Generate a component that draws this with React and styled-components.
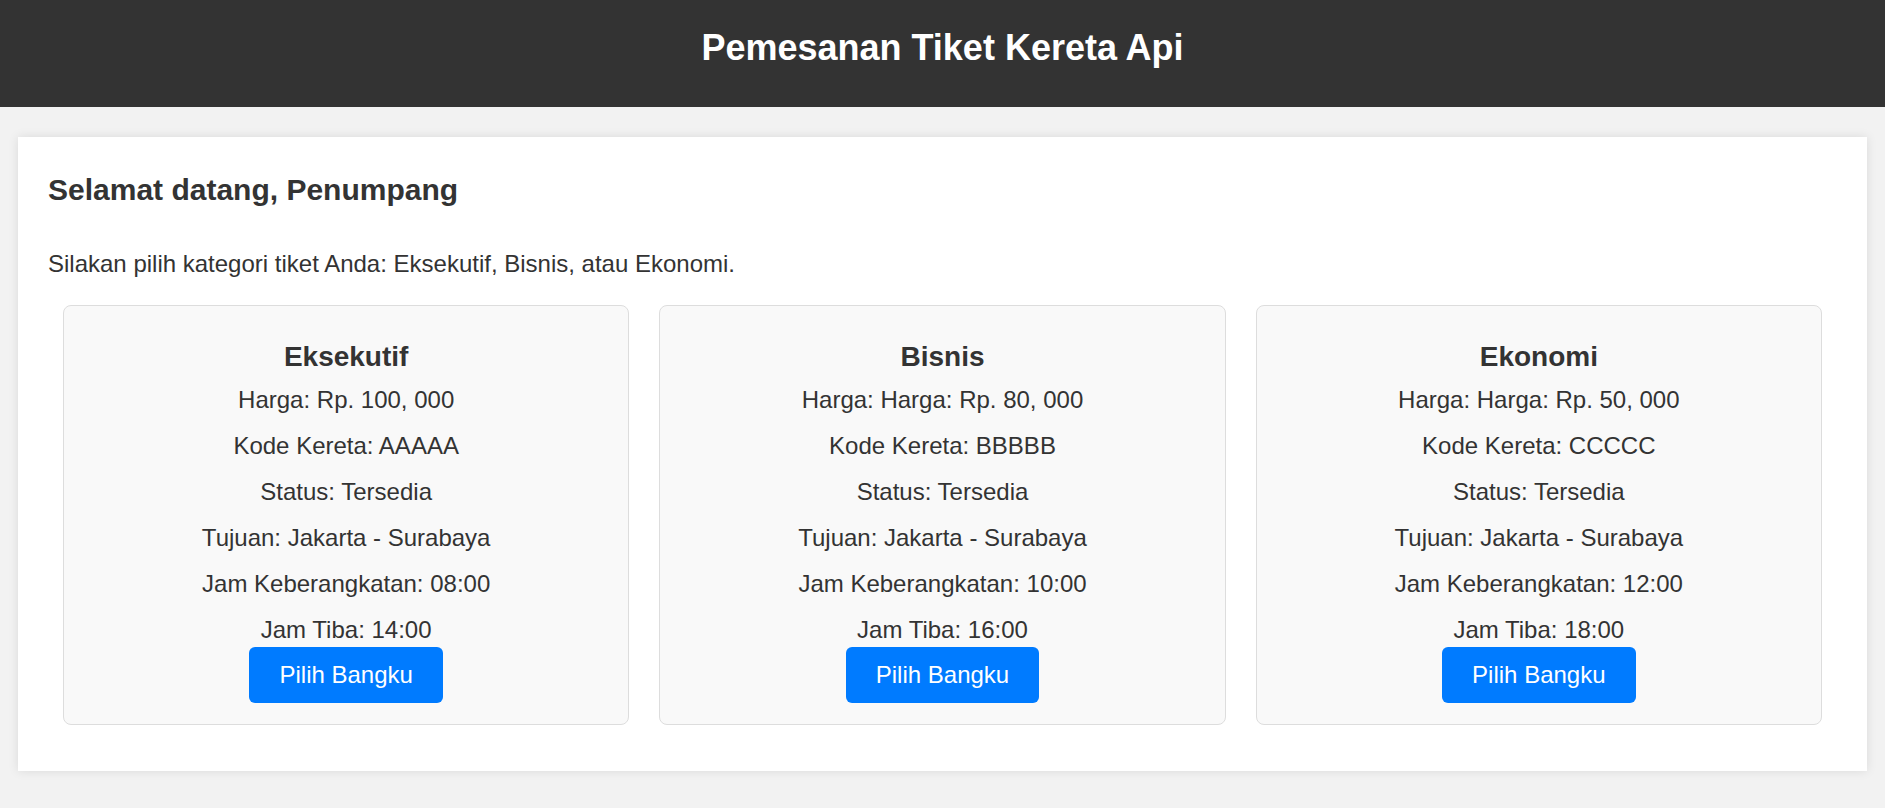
import React from 'react';
import styled, { createGlobalStyle } from 'styled-components';

const GlobalStyle = createGlobalStyle`
  body {
    margin: 0;
    background-color: #f2f2f2;
    font-family: "Liberation Sans", Arial, sans-serif;
    color: #333333;
  }
`;

const Header = styled.header`
  box-sizing: border-box;
  height: 107px;
  padding-top: 27px;
  background-color: #333333;
  color: #ffffff;
  text-align: center;
`;

const HeaderTitle = styled.h1`
  margin: 0;
  font-size: 36px;
  line-height: 41px;
  font-weight: bold;
`;

const Main = styled.main`
  padding: 30px 18px;
`;

const Container = styled.section`
  background-color: #ffffff;
  padding: 30px 30px 31px;
  box-shadow: 0 0 10px rgba(0, 0, 0, 0.1);
`;

const Welcome = styled.h2`
  margin: 6px 0 0;
  font-size: 30px;
  line-height: 34.5px;
  font-weight: bold;
`;

const Intro = styled.p`
  margin: 42.5px 0 0;
  font-size: 24px;
  line-height: 27.6px;
`;

const CardRow = styled.div`
  display: grid;
  grid-template-columns: repeat(3, 1fr);
  gap: 30px;
  padding: 0 15px;
  margin: 27.4px 0 15px;
`;

const Card = styled.div`
  display: flex;
  flex-direction: column;
  align-items: center;
  padding: 35px 20px 21px;
  background-color: #f9f9f9;
  border: 1px solid #dddddd;
  border-radius: 8px;
  text-align: center;
`;

const CardTitle = styled.h3`
  margin: 0;
  font-size: 28px;
  line-height: 32px;
  font-weight: bold;
`;

const InfoList = styled.div`
  display: flex;
  flex-direction: column;
  gap: 18.4px;
  margin-top: 12.6px;
`;

const InfoLine = styled.p`
  margin: 0;
  font-size: 24px;
  line-height: 27.6px;
`;

const SeatButton = styled.button`
  margin-top: 4px;
  height: 56px;
  padding: 0 30px;
  border: none;
  border-radius: 6px;
  background-color: #007bff;
  color: #ffffff;
  font-family: "Liberation Sans", Arial, sans-serif;
  font-size: 24px;
  cursor: pointer;

  &:hover {
    background-color: #0069d9;
  }
`;

const tickets = [
  { name: 'Eksekutif', price: 'Harga: Rp. 100, 000', code: 'AAAAA', depart: '08:00', arrive: '14:00' },
  { name: 'Bisnis', price: 'Harga: Harga: Rp. 80, 000', code: 'BBBBB', depart: '10:00', arrive: '16:00' },
  { name: 'Ekonomi', price: 'Harga: Harga: Rp. 50, 000', code: 'CCCCC', depart: '12:00', arrive: '18:00' },
];

const App = () => {
  return (
    <>
      <GlobalStyle />
      <Header>
        <HeaderTitle>Pemesanan Tiket Kereta Api</HeaderTitle>
      </Header>
      <Main>
        <Container>
          <Welcome>Selamat datang, Penumpang</Welcome>
          <Intro>Silakan pilih kategori tiket Anda: Eksekutif, Bisnis, atau Ekonomi.</Intro>
          <CardRow>
            {tickets.map((t) => (
              <Card key={t.name}>
                <CardTitle>{t.name}</CardTitle>
                <InfoList>
                  <InfoLine>{t.price}</InfoLine>
                  <InfoLine>Kode Kereta: {t.code}</InfoLine>
                  <InfoLine>Status: Tersedia</InfoLine>
                  <InfoLine>Tujuan: Jakarta - Surabaya</InfoLine>
                  <InfoLine>Jam Keberangkatan: {t.depart}</InfoLine>
                  <InfoLine>Jam Tiba: {t.arrive}</InfoLine>
                </InfoList>
                <SeatButton>Pilih Bangku</SeatButton>
              </Card>
            ))}
          </CardRow>
        </Container>
      </Main>
    </>
  );
};

export default App;
